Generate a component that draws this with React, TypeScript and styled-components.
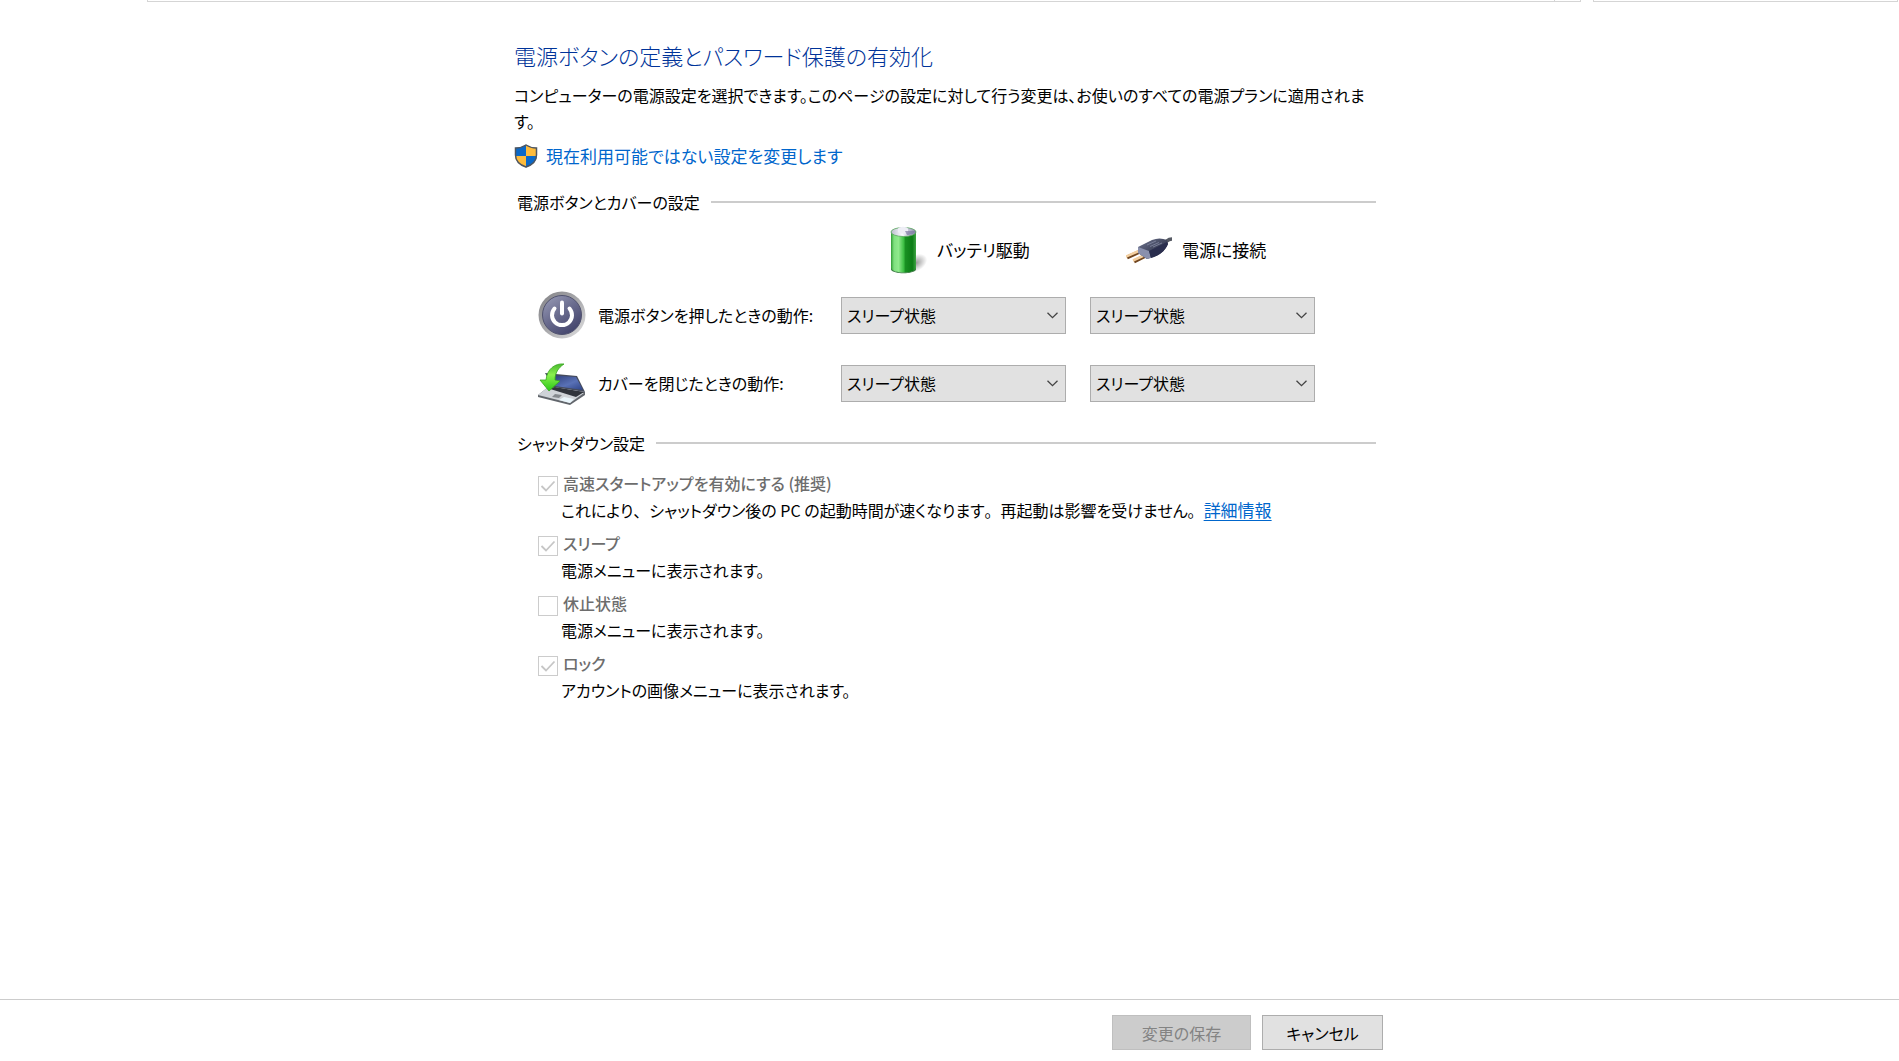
import React from "react";
import styled, { createGlobalStyle } from "styled-components";

const GlobalStyle = createGlobalStyle`
  * { box-sizing: border-box; }
  body {
    margin: 0;
    background: #fff;
    color: #000;
    font-family: "Noto Sans CJK JP", sans-serif;
    font-feature-settings: "palt";
    font-weight: 400;
    font-size: 16px;
    line-height: 26px;
  }
  button, select, input { font: inherit; font-feature-settings: inherit; color: inherit; }
`;

const Page = styled.div`
  display: flex;
  flex-direction: column;
  min-height: 100vh;
`;

const TopStrip = styled.div`
  display: flex;
  gap: 12px;
  height: 2px;
  padding: 0 1px 0 147px;
`;

const StripBox = styled.div<{ $grow?: boolean }>`
  display: flex;
  justify-content: flex-end;
  flex: ${(p) => (p.$grow ? "1 1 auto" : "0 0 305px")};
  border: 1px solid #d5d5d5;
  border-top: 0;
`;

const StripDivider = styled.div`
  width: 26px;
  border-left: 1px solid #d5d5d5;
`;

const Column = styled.div`
  width: 100%;
  max-width: 871px;
  margin: 0 auto;
  padding-right: 2px;
`;

const Main = styled.main`
  flex: 1;
  padding-top: 36px;
`;

const Title = styled.h1`
  margin: 0;
  font-size: 22px;
  line-height: 34px;
  font-weight: 300;
  color: #003399;
`;

const Intro = styled.p`
  margin: 10px 0 0;
  padding-right: 8px;
`;

const FullWidth = styled.span`
  font-feature-settings: normal;
`;

const AdminLink = styled.a`
  display: flex;
  align-items: center;
  gap: 8px;
  margin-top: 9px;
  font-size: 17px;
  color: #0066cc;
  text-decoration: none;
`;

const Section = styled.section`
  padding: 0 7px 0 3px;
`;

const SectionHeading = styled.h2`
  display: flex;
  align-items: center;
  gap: 11px;
  margin: 20px 0 0;
  font-size: 16px;
  line-height: 26px;
  font-weight: 400;

  &::after {
    content: "";
    flex: 1;
    height: 2px;
    background: #cccccc;
  }
`;

const SettingRows = styled.div`
  display: flex;
  flex-direction: column;
  gap: 20px;
  margin-bottom: 23px;
  padding-left: 21px;
`;

const SettingRow = styled.div`
  display: grid;
  grid-template-columns: 279px 225px 225px;
  column-gap: 24px;
  align-items: center;
  min-height: 48px;
`;

const HeaderRow = styled(SettingRow)`
  margin: 11px 0 -3px;
  font-size: 17px;
`;

const IconLabel = styled.div<{ $gap: number; $indent?: number }>`
  display: flex;
  align-items: center;
  gap: ${(p) => p.$gap}px;
  padding-left: ${(p) => p.$indent ?? 0}px;
  white-space: nowrap;

  svg { flex: none; }
`;

const SelectFrame = styled.div`
  position: relative;

  svg {
    position: absolute;
    right: 8px;
    top: 15px;
    pointer-events: none;
  }
`;

const Select = styled.select`
  display: block;
  appearance: none;
  width: 100%;
  height: 37px;
  padding: 0 28px 0 5px;
  border: 1px solid #adadad;
  border-radius: 0;
  background: #e1e1e1;
`;

const OptionList = styled.div`
  display: flex;
  flex-direction: column;
  gap: 8px;
  margin-top: 15px;
  padding-left: 21px;
`;

const OptionHead = styled.div`
  display: flex;
  gap: 5px;
`;

const CheckFrame = styled.span`
  position: relative;
  width: 20px;
  height: 20px;
  margin-top: 5px;

  svg {
    position: absolute;
    left: 0;
    top: 0;
    pointer-events: none;
  }
`;

const Checkbox = styled.input`
  display: block;
  appearance: none;
  width: 20px;
  height: 20px;
  margin: 0;
  border: 1px solid #cccccc;
  background: #fff;
`;

const OptionLabel = styled.label`
  line-height: 24px;
  font-weight: 500;
  color: #6d6d6d;
`;

const OptionText = styled.p`
  margin: 1px 0 0;
  padding-left: 23px;
`;

const InlineLink = styled.a`
  font-size: 17px;
  color: #0066cc;
  text-decoration: underline;
  text-underline-offset: 3px;
`;

const Footer = styled.footer`
  border-top: 1px solid #cccccc;
  padding: 15px 0 11px;
`;

const Buttons = styled(Column)`
  display: flex;
  justify-content: flex-end;
  gap: 11px;
`;

const Button = styled.button<{ $width: number }>`
  width: ${(p) => p.$width}px;
  height: 35px;
  padding: 0;
  border: 1px solid #adadad;
  background: #e1e1e1;

  &:disabled {
    border-color: #bfbfbf;
    background: #cccccc;
    color: #838383;
  }
`;

const ShieldIcon = () => (
  <svg width="24" height="24" viewBox="0 0 24 24" aria-hidden="true">
    <clipPath id="shield">
      <path d="M12 1C9 3 5 4 1 4v7c0 6 5 10 11 12.500C18 21 23 17 23 11V4c-4 0-8-1-11-3z" />
    </clipPath>
    <g clipPath="url(#shield)">
      <path fill="#0a68c8" d="M0 0h12v12H0zM12 12h12v12H12z" />
      <path fill="#fdbb3c" d="M12 0h12v12H12zM0 12h12v12H0z" />
    </g>
    <path
      d="M12 1C9 3 5 4 1.500 4v7c0 6 4.500 10 10.500 12C18 21 22.500 17 22.500 11V4C19 4 15 3 12 1z"
      fill="none"
      stroke="#4d5560"
      strokeWidth="1.500"
    />
  </svg>
);

const BatteryIcon = () => (
  <svg width="48" height="48" viewBox="0 0 48 48" aria-hidden="true">
    <defs>
      <linearGradient id="cell">
        <stop offset="0" stopColor="#2f9c35" />
        <stop offset=".12" stopColor="#7fe07f" />
        <stop offset=".3" stopColor="#8fea8c" />
        <stop offset=".5" stopColor="#3fc046" />
        <stop offset=".58" stopColor="#189022" />
        <stop offset=".85" stopColor="#0c7c16" />
        <stop offset="1" stopColor="#3da443" />
      </linearGradient>
      <linearGradient id="cap">
        <stop offset="0" stopColor="#b9bccb" />
        <stop offset=".45" stopColor="#fafaff" />
        <stop offset="1" stopColor="#8583a5" />
      </linearGradient>
      <radialGradient id="cast">
        <stop offset="0" stopColor="#000" stopOpacity=".4" />
        <stop offset="1" stopColor="#000" stopOpacity="0" />
      </radialGradient>
    </defs>
    <ellipse cx="35" cy="37" rx="12" ry="8" fill="url(#cast)" transform="rotate(-30 35 37)" />
    <path d="M10 6v37c2 5 23 5 25 0V6z" fill="url(#cell)" />
    <path d="M10 42c2 6 23 6 25 0v1.500c-2 5-23 5-25 0z" fill="#3a7a42" />
    <ellipse cx="22.500" cy="6" rx="12.500" ry="4.500" fill="url(#cap)" stroke="#58a65c" strokeWidth=".8" />
    <path d="M17 3c0-3 10-3 10 0v3c-1 2-9 2-10 0z" fill="#eeeef6" />
    <path d="M24 5l10 0c0 3-5 4-8 4z" fill="#7d7ba3" opacity=".7" />
  </svg>
);

const PlugIcon = () => (
  <svg width="48" height="48" viewBox="1 -1 48 48" aria-hidden="true">
    <defs>
      <linearGradient id="plugTop" x1="0" y1="0" x2="1" y2="1">
        <stop offset="0" stopColor="#737994" />
        <stop offset=".5" stopColor="#434860" />
        <stop offset="1" stopColor="#171b34" />
      </linearGradient>
    </defs>
    <path d="M38 16c4-1 4-4 9-4" fill="none" stroke="#555963" strokeWidth="3.500" />
    <path d="M2 30.500L15 24.500M9 34.500L22 28" fill="none" stroke="#70451f" strokeWidth="4" />
    <path d="M1 29.500L15 23.500M8 33.500L22 27" fill="none" stroke="#f3cfa0" strokeWidth="2.500" />
    <path d="M13 20l14-7c5-2 10-2 15 0l1 4c-3 7-8 11-15 13l-6 2-9-6z" fill="url(#plugTop)" />
    <path d="M13 20l11 4 2 7-4 1-9-6z" fill="#8a90ad" />
    <path d="M24 24l18-9 1 2c-3 7-9 12-17 14z" fill="#2a2e4e" />
    <path d="M22 18l9-4M25 19.500l9-4M28 20l9-4" stroke="#8389a3" strokeWidth=".8" />
  </svg>
);

const PowerIcon = () => (
  <svg width="48" height="48" viewBox="0 0 48 48" aria-hidden="true">
    <defs>
      <linearGradient id="rim" x1="0" y1="0" x2="1" y2="1">
        <stop offset="0" stopColor="#808084" />
        <stop offset=".5" stopColor="#a9a9ac" />
        <stop offset="1" stopColor="#e2e2e3" />
      </linearGradient>
      <linearGradient id="face" x1="0" y1="0" x2=".7" y2="1">
        <stop offset="0" stopColor="#9da0ba" />
        <stop offset=".5" stopColor="#6c6e90" />
        <stop offset="1" stopColor="#43446c" />
      </linearGradient>
    </defs>
    <circle cx="24" cy="24" r="23.500" fill="url(#rim)" />
    <circle cx="24" cy="24" r="19.500" fill="url(#face)" stroke="#50526e" strokeWidth="1" />
    <g fill="none" stroke="#fff" strokeWidth="4" strokeLinecap="round">
      <path d="M16.500 17.500a10 10 0 1 0 15 0" />
      <path d="M24 11.500v11" />
    </g>
  </svg>
);

const LidIcon = () => (
  <svg width="48" height="48" viewBox="0 -2 48 48" aria-hidden="true">
    <defs>
      <linearGradient id="screen" x1="0" y1="0" x2="1" y2="1">
        <stop offset="0" stopColor="#27366f" />
        <stop offset=".6" stopColor="#5971b6" />
        <stop offset="1" stopColor="#2d4285" />
      </linearGradient>
      <linearGradient id="swoop" x1="0" y1="0" x2="0" y2="1">
        <stop offset="0" stopColor="#48b92d" />
        <stop offset=".4" stopColor="#8bf04f" />
        <stop offset="1" stopColor="#29c916" />
      </linearGradient>
    </defs>
    <path d="M0 34l9-7 38 4v3L32 44 0 36z" fill="#62666c" />
    <path d="M0 34l9-7 37 5-14 10z" fill="#cfd3d8" />
    <path d="M9 27l8-1 29 5-8 5z" fill="#30343c" />
    <path d="M17 33l7 1-3 3-7-1z" fill="#85898e" />
    <path d="M26 36l10 2-4 4-11-3z" fill="#e9f5fb" />
    <path d="M7 12l32 3 8 16-32-5z" fill="#454b5c" />
    <path d="M10 14l28 2 7 13-28-4z" fill="url(#screen)" />
    <path
      d="M26 3C17 2 9 8 8 19l-6 0 9 11 11-10-5-1C17 12 20 7 26 3z"
      fill="url(#swoop)"
      stroke="#35a51d"
      strokeWidth=".8"
    />
  </svg>
);

const Chevron = () => (
  <svg width="11" height="7" viewBox="0 0 11 7" aria-hidden="true">
    <path d="M.5.7l5 5 5-5" fill="none" stroke="#444" strokeWidth="1.300" />
  </svg>
);

const CheckMark = () => (
  <svg width="20" height="20" viewBox="0 0 20 20" aria-hidden="true">
    <path d="M3.500 10l4.500 4.500 8.500-9" fill="none" stroke="#c6c6c6" strokeWidth="1.800" />
  </svg>
);

/* Kana are set proportionally, while 、 and 。 keep their full advance. */
const Prose = ({ children }: { children: string }) => (
  <>
    {children
      .split(/([、。])/)
      .map((part, i) => (i % 2 ? <FullWidth key={i}>{part}</FullWidth> : part))}
  </>
);

const ActionSelect = ({ label }: { label: string }) => (
  <SelectFrame>
    <Select aria-label={label} defaultValue="sleep">
      <option value="sleep">スリープ状態</option>
    </Select>
    <Chevron />
  </SelectFrame>
);

const actions = [
  { label: "電源ボタンを押したときの動作:", icon: <PowerIcon /> },
  { label: "カバーを閉じたときの動作:", icon: <LidIcon /> },
];

const options = [
  {
    id: "fast",
    label: "高速スタートアップを有効にする (推奨)",
    text: "これにより、シャットダウン後の PC の起動時間が速くなります。再起動は影響を受けません。",
    link: "詳細情報",
    checked: true,
  },
  { id: "sleep", label: "スリープ", text: "電源メニューに表示されます。", checked: true },
  { id: "hibernate", label: "休止状態", text: "電源メニューに表示されます。", checked: false },
  { id: "lock", label: "ロック", text: "アカウントの画像メニューに表示されます。", checked: true },
];

export default function App() {
  return (
    <Page>
      <GlobalStyle />
      <TopStrip>
        <StripBox $grow>
          <StripDivider />
        </StripBox>
        <StripBox />
      </TopStrip>
      <Main>
        <Column>
          <Title>電源ボタンの定義とパスワード保護の有効化</Title>
          <Intro>
            コンピューターの電源設定を選択できます。このページの設定に対して行う変更は、お使いのすべての電源プランに適用されます。
          </Intro>
          <AdminLink href="#">
            <ShieldIcon />
            現在利用可能ではない設定を変更します
          </AdminLink>
          <Section>
            <SectionHeading>電源ボタンとカバーの設定</SectionHeading>
            <SettingRows>
              <HeaderRow>
                <span />
                <IconLabel $gap={8} $indent={40}>
                  <BatteryIcon />
                  バッテリ駆動
                </IconLabel>
                <IconLabel $gap={8} $indent={36}>
                  <PlugIcon />
                  電源に接続
                </IconLabel>
              </HeaderRow>
              {actions.map((a) => (
                <SettingRow key={a.label}>
                  <IconLabel $gap={12}>
                    {a.icon}
                    {a.label}
                  </IconLabel>
                  <ActionSelect label={`${a.label} バッテリ駆動`} />
                  <ActionSelect label={`${a.label} 電源に接続`} />
                </SettingRow>
              ))}
            </SettingRows>
          </Section>
          <Section>
            <SectionHeading>シャットダウン設定</SectionHeading>
            <OptionList>
              {options.map((o) => (
                <div key={o.id}>
                  <OptionHead>
                    <CheckFrame>
                      <Checkbox type="checkbox" id={o.id} defaultChecked={o.checked} disabled />
                      {o.checked && <CheckMark />}
                    </CheckFrame>
                    <OptionLabel htmlFor={o.id}>{o.label}</OptionLabel>
                  </OptionHead>
                  <OptionText>
                    {o.link ? <Prose>{o.text}</Prose> : o.text}
                    {o.link && <InlineLink href="#">{o.link}</InlineLink>}
                  </OptionText>
                </div>
              ))}
            </OptionList>
          </Section>
        </Column>
      </Main>
      <Footer>
        <Buttons>
          <Button $width={139} disabled>
            変更の保存
          </Button>
          <Button $width={121}>キャンセル</Button>
        </Buttons>
      </Footer>
    </Page>
  );
}
